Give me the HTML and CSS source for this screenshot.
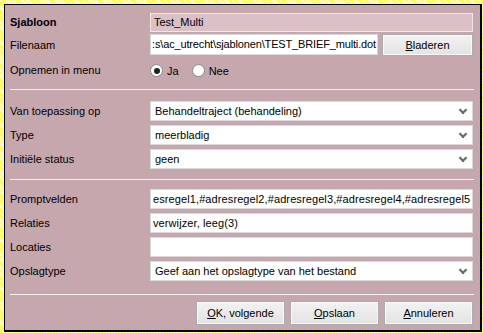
FILE: index.html
```html
<!DOCTYPE html>
<html lang="nl">
<head>
    <meta charset="UTF-8">
    <title>Sjabloon</title>
    <link rel="stylesheet" href="styles.css">
</head>
<body>
    <div class="dialog">
        <div class="section top">
            <div class="row">
                <label class="lbl bold">Sjabloon</label>
                <div class="field readonly">Test_Multi</div>
            </div>
            <div class="row row-file">
                <label class="lbl">Filenaam</label>
                <div class="file-line">
                    <div class="field file">:s\ac_utrecht\sjablonen\TEST_BRIEF_multi.dot</div>
                    <button class="btn browse"><u>B</u>laderen</button>
                </div>
            </div>
            <div class="row row-radio">
                <label class="lbl">Opnemen in menu</label>
                <div class="radios">
                    <span class="radio"><span class="dot checked"></span>Ja</span>
                    <span class="radio"><span class="dot"></span>Nee</span>
                </div>
            </div>
        </div>

        <div class="sep sep-1"></div>

        <div class="section list list-1">
            <div class="row">
                <label class="lbl">Van toepassing op</label>
                <div class="field select">Behandeltraject (behandeling)<span class="chev"></span></div>
            </div>
            <div class="row">
                <label class="lbl">Type</label>
                <div class="field select">meerbladig<span class="chev"></span></div>
            </div>
            <div class="row">
                <label class="lbl">Initiële status</label>
                <div class="field select">geen<span class="chev"></span></div>
            </div>
        </div>

        <div class="sep sep-2"></div>

        <div class="section list list-2">
            <div class="row">
                <label class="lbl">Promptvelden</label>
                <div class="field clip">esregel1,#adresregel2,#adresregel3,#adresregel4,#adresregel5</div>
            </div>
            <div class="row">
                <label class="lbl">Relaties</label>
                <div class="field clip">verwijzer, leeg(3)</div>
            </div>
            <div class="row">
                <label class="lbl">Locaties</label>
                <div class="field clip"></div>
            </div>
            <div class="row">
                <label class="lbl">Opslagtype</label>
                <div class="field select">Geef aan het opslagtype van het bestand<span class="chev"></span></div>
            </div>
        </div>

        <div class="sep sep-3"></div>

        <div class="actions">
            <button class="btn"><u>O</u>K, volgende</button>
            <button class="btn"><u>O</u>pslaan</button>
            <button class="btn"><u>A</u>nnuleren</button>
        </div>
    </div>
</body>
</html>
```

FILE: styles.css
```css
html, body {
    margin: 0;
    height: 100%;
}
body {
    background: repeating-linear-gradient(45deg, #ffff3c 0 1px, #fffde0 1px 2px);
    font-family: "Liberation Sans", Arial, sans-serif;
    font-size: 11px;
    color: #000;
    padding: 4px 1px 1px 4px;
    box-sizing: border-box;
}
.dialog {
    height: 100%;
    box-sizing: border-box;
    background-color: #c5a7ad;
    border: 1px solid #000;
    border-right-width: 2px;
    border-bottom-width: 2px;
    padding: 7px 7px 0 5px;
}
.section {
    display: flex;
    flex-direction: column;
}
.row {
    display: grid;
    grid-template-columns: 140px minmax(0, 1fr);
    align-items: center;
    height: 20px;
}
.bold {
    font-weight: bold;
}
.row-file {
    margin-top: 2px;
    height: 22px;
}
.row-radio {
    margin-top: 3px;
    height: 22px;
}
.field {
    height: 20px;
    box-sizing: border-box;
    background: #fff;
    border: 1px solid #dadada;
    padding: 0 4px;
    line-height: 18px;
    white-space: nowrap;
    overflow: hidden;
    position: relative;
}
.readonly {
    height: 19px;
    line-height: 17px;
    background: #dbc0c5;
    border-color: #f1e7e9;
    padding-left: 3px;
}
.clip {
    padding-left: 2px;
    padding-right: 2px;
    letter-spacing: 0.1px;
}
.file-line {
    display: flex;
    gap: 4px;
    min-width: 0;
}
.file {
    flex: 1;
    min-width: 0;
    height: 21px;
    line-height: 19px;
    padding: 0 0 0 1px;
    letter-spacing: -0.15px;
}
.btn {
    font-family: inherit;
    font-size: 11px;
    color: #000;
    height: 24px;
    padding: 0;
    background: linear-gradient(#f2f2f2, #e3e3e3);
    border: 1px solid #adadad;
    box-shadow: inset 0 0 0 1px #f8f8f8;
    border-radius: 0;
}
.browse {
    flex: 0 0 91px;
    height: 22px;
}
.radios {
    display: flex;
    gap: 13px;
    padding-top: 1px;
}
.radio {
    display: inline-flex;
    align-items: center;
    gap: 4px;
}
.dot {
    width: 13px;
    height: 13px;
    box-sizing: border-box;
    border: 1px solid #8a8a8a;
    border-radius: 50%;
    background: #fff;
    position: relative;
}
.checked::after {
    content: "";
    position: absolute;
    left: 2.5px;
    top: 2.5px;
    width: 6px;
    height: 6px;
    border-radius: 50%;
    background: #222;
}
.sep {
    height: 1px;
    background: #f7f4f4;
    margin-right: -1px;
}
.sep-1 {
    margin-top: 8px;
}
.sep-2 {
    margin-top: 10px;
}
.sep-3 {
    margin-top: 13px;
}
.list {
    gap: 4px;
}
.list-1 {
    padding-top: 11px;
}
.list-2 {
    padding-top: 9px;
}
.chev {
    position: absolute;
    right: 6px;
    top: 5px;
    width: 4px;
    height: 4px;
    border-right: 2px solid #666;
    border-bottom: 2px solid #666;
    transform: rotate(45deg);
}
.actions {
    display: flex;
    justify-content: flex-end;
    gap: 5px;
    padding-top: 6px;
}
.actions .btn {
    width: 89px;
}
```
